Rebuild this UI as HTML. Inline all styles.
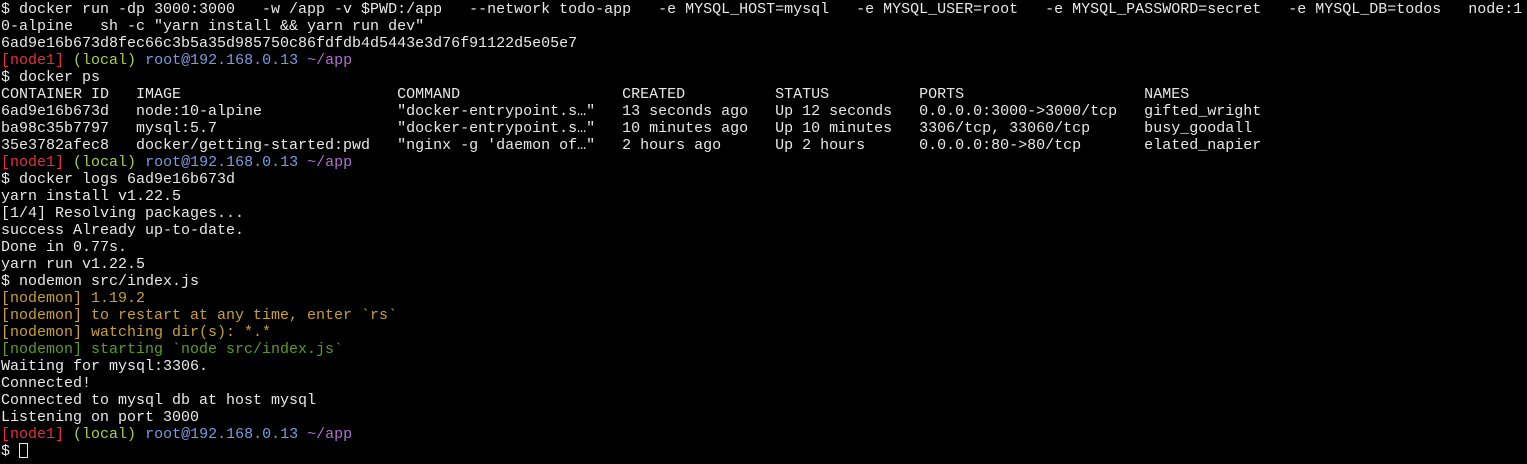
<!DOCTYPE html>
<html><head><style>
html,body{margin:0;padding:0;background:#000;width:1527px;height:464px;overflow:hidden}
pre{margin:0;padding:1px 0 0 1px;font-family:"Liberation Mono",monospace;font-size:15px;line-height:17px;color:#e8e8e8;white-space:pre}
.r{color:#e8303a}.g{color:#a6d13a}.b{color:#7b9be0}.p{color:#b070d0}.y{color:#c8a032}.gr{color:#5e9a2a}
.cur{display:inline-block;width:9px;height:15px;border:1px solid #e8e8e8;vertical-align:-3px;box-sizing:border-box}
</style></head><body><pre>$ docker run -dp 3000:3000   -w /app -v $PWD:/app   --network todo-app   -e MYSQL_HOST=mysql   -e MYSQL_USER=root   -e MYSQL_PASSWORD=secret   -e MYSQL_DB=todos   node:1
0-alpine   sh -c "yarn install &amp;&amp; yarn run dev"
6ad9e16b673d8fec66c3b5a35d985750c86fdfdb4d5443e3d76f91122d5e05e7
<span class="r">[node1]</span> <span class="g">(local)</span> <span class="b">root@192.168.0.13</span> <span class="p">~/app</span>
$ docker ps
CONTAINER ID   IMAGE                        COMMAND                  CREATED          STATUS          PORTS                    NAMES
6ad9e16b673d   node:10-alpine               "docker-entrypoint.s…"   13 seconds ago   Up 12 seconds   0.0.0.0:3000-&gt;3000/tcp   gifted_wright
ba98c35b7797   mysql:5.7                    "docker-entrypoint.s…"   10 minutes ago   Up 10 minutes   3306/tcp, 33060/tcp      busy_goodall
35e3782afec8   docker/getting-started:pwd   "nginx -g 'daemon of…"   2 hours ago      Up 2 hours      0.0.0.0:80-&gt;80/tcp       elated_napier
<span class="r">[node1]</span> <span class="g">(local)</span> <span class="b">root@192.168.0.13</span> <span class="p">~/app</span>
$ docker logs 6ad9e16b673d
yarn install v1.22.5
[1/4] Resolving packages...
success Already up-to-date.
Done in 0.77s.
yarn run v1.22.5
$ nodemon src/index.js
<span class="y">[nodemon] 1.19.2</span>
<span class="y">[nodemon] to restart at any time, enter `rs`</span>
<span class="y">[nodemon] watching dir(s): *.*</span>
<span class="gr">[nodemon] starting `node src/index.js`</span>
Waiting for mysql:3306.
Connected!
Connected to mysql db at host mysql
Listening on port 3000
<span class="r">[node1]</span> <span class="g">(local)</span> <span class="b">root@192.168.0.13</span> <span class="p">~/app</span>
$ <span class="cur"></span></pre></body></html>
